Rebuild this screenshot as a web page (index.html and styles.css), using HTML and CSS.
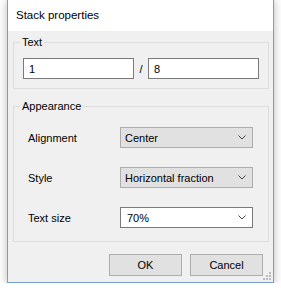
FILE: index.html
```html
<!DOCTYPE html>
<html lang="en">
<head>
    <meta charset="UTF-8">
    <title>Stack properties</title>
    <link rel="stylesheet" href="styles.css">
</head>
<body>
    <div class="window">
        <div class="titlebar">Stack properties</div>

        <div class="content">
            <!-- Text group -->
            <fieldset class="group group-text">
                <legend>Text</legend>
                <div class="fraction">
                    <input type="text" class="field" value="1">
                    <span class="slash">/</span>
                    <input type="text" class="field" value="8">
                </div>
            </fieldset>

            <!-- Appearance group -->
            <fieldset class="group group-appearance">
                <legend>Appearance</legend>
                <div class="row">
                    <label>Alignment</label>
                    <div class="combo">
                        <span>Center</span>
                        <svg class="chevron" width="8" height="5" viewBox="0 0 8 5"><polyline points="0.5,0.5 4,4 7.5,0.5" fill="none" stroke="#444" stroke-width="1"/></svg>
                    </div>
                </div>
                <div class="row">
                    <label>Style</label>
                    <div class="combo">
                        <span>Horizontal fraction</span>
                        <svg class="chevron" width="8" height="5" viewBox="0 0 8 5"><polyline points="0.5,0.5 4,4 7.5,0.5" fill="none" stroke="#444" stroke-width="1"/></svg>
                    </div>
                </div>
                <div class="row row-last">
                    <label>Text size</label>
                    <div class="combo combo-edit">
                        <span>70%</span>
                        <svg class="chevron" width="8" height="5" viewBox="0 0 8 5"><polyline points="0.5,0.5 4,4 7.5,0.5" fill="none" stroke="#444" stroke-width="1"/></svg>
                    </div>
                </div>
            </fieldset>

            <div class="buttons">
                <button class="btn">OK</button>
                <button class="btn">Cancel</button>
            </div>
        </div>

        <svg class="grip" width="9" height="9" viewBox="0 0 9 9">
            <rect x="6" y="0" width="2" height="2" fill="#bdbdbd"/>
            <rect x="3" y="3" width="2" height="2" fill="#bdbdbd"/>
            <rect x="6" y="3" width="2" height="2" fill="#bdbdbd"/>
            <rect x="0" y="6" width="2" height="2" fill="#bdbdbd"/>
            <rect x="3" y="6" width="2" height="2" fill="#bdbdbd"/>
            <rect x="6" y="6" width="2" height="2" fill="#bdbdbd"/>
        </svg>
    </div>
</body>
</html>
```

FILE: styles.css
```css
* {
    margin: 0;
    padding: 0;
    box-sizing: border-box;
}

body {
    font-family: 'Liberation Sans', Arial, sans-serif;
    font-size: 11px;
    color: #000;
    background: #fff;
    overflow: hidden;
}

.window {
    position: relative;
    width: 267px;
    height: 284px;
    margin: -1px 0 0 7px;
    border: 1px solid #739fd3;
    background: #f0f0f0;
    box-shadow: 0 1px 9px rgba(0, 0, 0, 0.28);
}

.titlebar {
    height: 31px;
    line-height: 31px;
    padding-left: 8px;
    background: #fff;
    font-size: 11.5px;
}

.content {
    display: flex;
    flex-direction: column;
    padding: 4px 4px 0 5px;
}

.group {
    border: 1px solid #dcdcdc;
    padding: 9px 9px 9px 9px;
    min-width: 0;
}

.group legend {
    margin-left: -3px;
    padding: 0 2px;
    line-height: 14px;
}

.group-appearance {
    margin-top: 10px;
    padding: 14px 6px 13px 9px;
}

.fraction {
    display: flex;
    align-items: center;
}

.field {
    width: 111px;
    height: 21px;
    border: 1px solid #7a7a7a;
    background: #fff;
    font-family: inherit;
    font-size: 11px;
    padding: 0 5px;
    outline: none;
}

.slash {
    width: 14px;
    text-align: center;
}

.row {
    display: flex;
    align-items: center;
    margin-bottom: 19px;
}

.row-last {
    margin-bottom: 0;
    margin-top: 1px;
}

.row label {
    width: 97px;
    padding-left: 5px;
}

.combo {
    display: flex;
    align-items: center;
    justify-content: space-between;
    width: 133px;
    height: 21px;
    padding: 0 6px 0 4px;
    background: #e1e1e1;
    border: 1px solid #adadad;
}

.combo-edit {
    background: #fff;
    border-color: #7a7a7a;
    padding-left: 6px;
}

.chevron {
    display: block;
}

.buttons {
    display: flex;
    justify-content: flex-end;
    gap: 8px;
    margin-top: 12px;
    padding-right: 6px;
}

.btn {
    width: 73px;
    height: 22px;
    background: #e1e1e1;
    border: 1px solid #adadad;
    font-family: inherit;
    font-size: 11px;
    color: #000;
}

.grip {
    position: absolute;
    right: 1px;
    bottom: 1px;
}
```
